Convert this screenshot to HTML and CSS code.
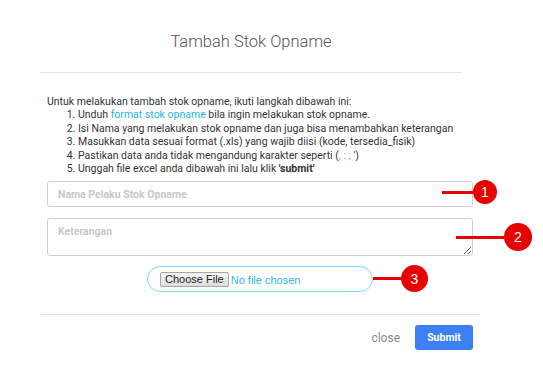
FILE: index.html
```html
<!DOCTYPE html>
<html lang="id">
<head>
    <meta charset="UTF-8">
    <meta name="viewport" content="width=device-width, initial-scale=1.0">
    <title>Tambah Stok Opname</title>
    <link rel="stylesheet" href="styles.css">
</head>
<body>
    <div class="modal">
        <div class="modal-header">
            <h4 class="modal-title">Tambah Stok Opname</h4>
        </div>

        <div class="modal-body">
            <p class="intro">Untuk melakukan tambah stok opname, ikuti langkah dibawah ini:</p>
            <ol class="steps">
                <li>Unduh <a href="#" class="link">format stok opname</a> bila ingin melakukan stok opname.</li>
                <li>Isi Nama yang melakukan stok opname dan juga bisa menambahkan keterangan</li>
                <li>Masukkan data sesuai format (.xls) yang wajib diisi (kode, tersedia_fisik)</li>
                <li>Pastikan data anda tidak mengandung karakter seperti (<span class="chars">, : ;</span> ')</li>
                <li>Unggah file excel anda dibawah ini lalu klik <b>'submit'</b></li>
            </ol>

            <input type="text" class="field" placeholder="Nama Pelaku Stok Opname">
            <textarea class="field area" placeholder="Keterangan"></textarea>

            <div class="file-row">
                <div class="file-pill">
                    <input type="file" class="file-input">
                </div>
            </div>
        </div>

        <div class="modal-footer">
            <button class="btn-close">close</button>
            <button class="btn-submit">Submit</button>
        </div>

        <!-- penanda langkah -->
        <div class="marker m1"><span class="bar"></span><span class="dot">1</span></div>
        <div class="marker m2"><span class="bar"></span><span class="dot">2</span></div>
        <div class="marker m3"><span class="bar"></span><span class="dot">3</span></div>
    </div>
</body>
</html>
```

FILE: styles.css
```css
body {
    margin: 0;
    background-color: #ffffff;
    font-family: Roboto, "Liberation Sans", sans-serif;
    color: #333333;
}
.modal {
    position: relative;
    width: 440px;
    margin-left: 40px;
}
.modal-header {
    width: 422px;
    height: 73px;
    border-bottom: 1px solid #e5e5e5;
    box-sizing: border-box;
    text-align: center;
}
.modal-title {
    margin: 0;
    padding-top: 32px;
    font-size: 16.5px;
    font-weight: 300;
    color: #555555;
    line-height: 20px;
}
.modal-body {
    padding: 22px 7px 22px 7px;
    font-size: 10.5px;
    line-height: 13.4px;
}
.intro {
    margin: 0;
}
.steps {
    margin: 0 0 6px 0;
    padding-left: 31px;
}
.link {
    color: #1fb5ea;
    text-decoration: none;
}
.chars {
    color: #ff8080;
}
.field {
    display: block;
    width: 100%;
    height: 26px;
    box-sizing: border-box;
    border: 1px solid #cfcfcf;
    border-radius: 3px;
    padding: 0 10px;
    font-family: Roboto, "Liberation Sans", sans-serif;
    font-size: 10.5px;
    font-weight: bold;
    color: #555555;
}
.field::placeholder {
    color: #c8c8c8;
}
.area {
    height: 38px;
    margin-top: 11px;
    padding-top: 6px;
    resize: vertical;
}
.file-row {
    display: flex;
    justify-content: center;
    margin-top: 10px;
}
.file-pill {
    width: 226px;
    height: 26px;
    box-sizing: border-box;
    border: 1px solid #7fd6ef;
    border-radius: 13px;
    padding-left: 12px;
    display: flex;
    align-items: center;
}
.file-input {
    font-family: "Liberation Sans", Arial, sans-serif;
    font-size: 11px;
    color: #2bb8ec;
}
.file-input::file-selector-button {
    font-family: "Liberation Sans", Arial, sans-serif;
    font-size: 11px;
    color: #222222;
    background: linear-gradient(#f6f6f6, #dedede);
    border: 1px solid #a6a6a6;
    border-radius: 2px;
    padding: 0 4px;
    height: 15px;
    margin-right: 2px;
}
.modal-footer {
    margin-left: 1px;
    width: 439px;
    border-top: 1px solid #e5e5e5;
    padding: 10px 7px 0 0;
    box-sizing: border-box;
    display: flex;
    justify-content: flex-end;
    align-items: center;
    gap: 15px;
}
.btn-close {
    background: none;
    border: none;
    font-family: Roboto, "Liberation Sans", sans-serif;
    font-size: 12px;
    color: #888888;
    padding: 0;
}
.btn-submit {
    width: 58px;
    height: 25px;
    background-color: #3d7ff5;
    border: none;
    border-radius: 3px;
    color: #ffffff;
    font-family: Roboto, "Liberation Sans", sans-serif;
    font-size: 10.5px;
    font-weight: bold;
}

/* penanda merah di atas form */
.marker {
    position: absolute;
    display: flex;
    align-items: center;
}
.bar {
    height: 3px;
    background-color: #e60000;
}
.dot {
    display: flex;
    align-items: center;
    justify-content: center;
    border-radius: 50%;
    background-color: #e60000;
    color: #ffffff;
    font-family: "Liberation Sans", Arial, sans-serif;
    font-size: 14px;
}
.m1 {
    left: 402px;
    top: 180px;
}
.m1 .bar { width: 31px; }
.m1 .dot { width: 24px; height: 24px; }
.m2 {
    left: 416px;
    top: 223px;
}
.m2 .bar { width: 48px; }
.m2 .dot { width: 28px; height: 28px; }
.m3 {
    left: 333px;
    top: 265px;
}
.m3 .bar { width: 28px; }
.m3 .dot { width: 27px; height: 27px; }
```
